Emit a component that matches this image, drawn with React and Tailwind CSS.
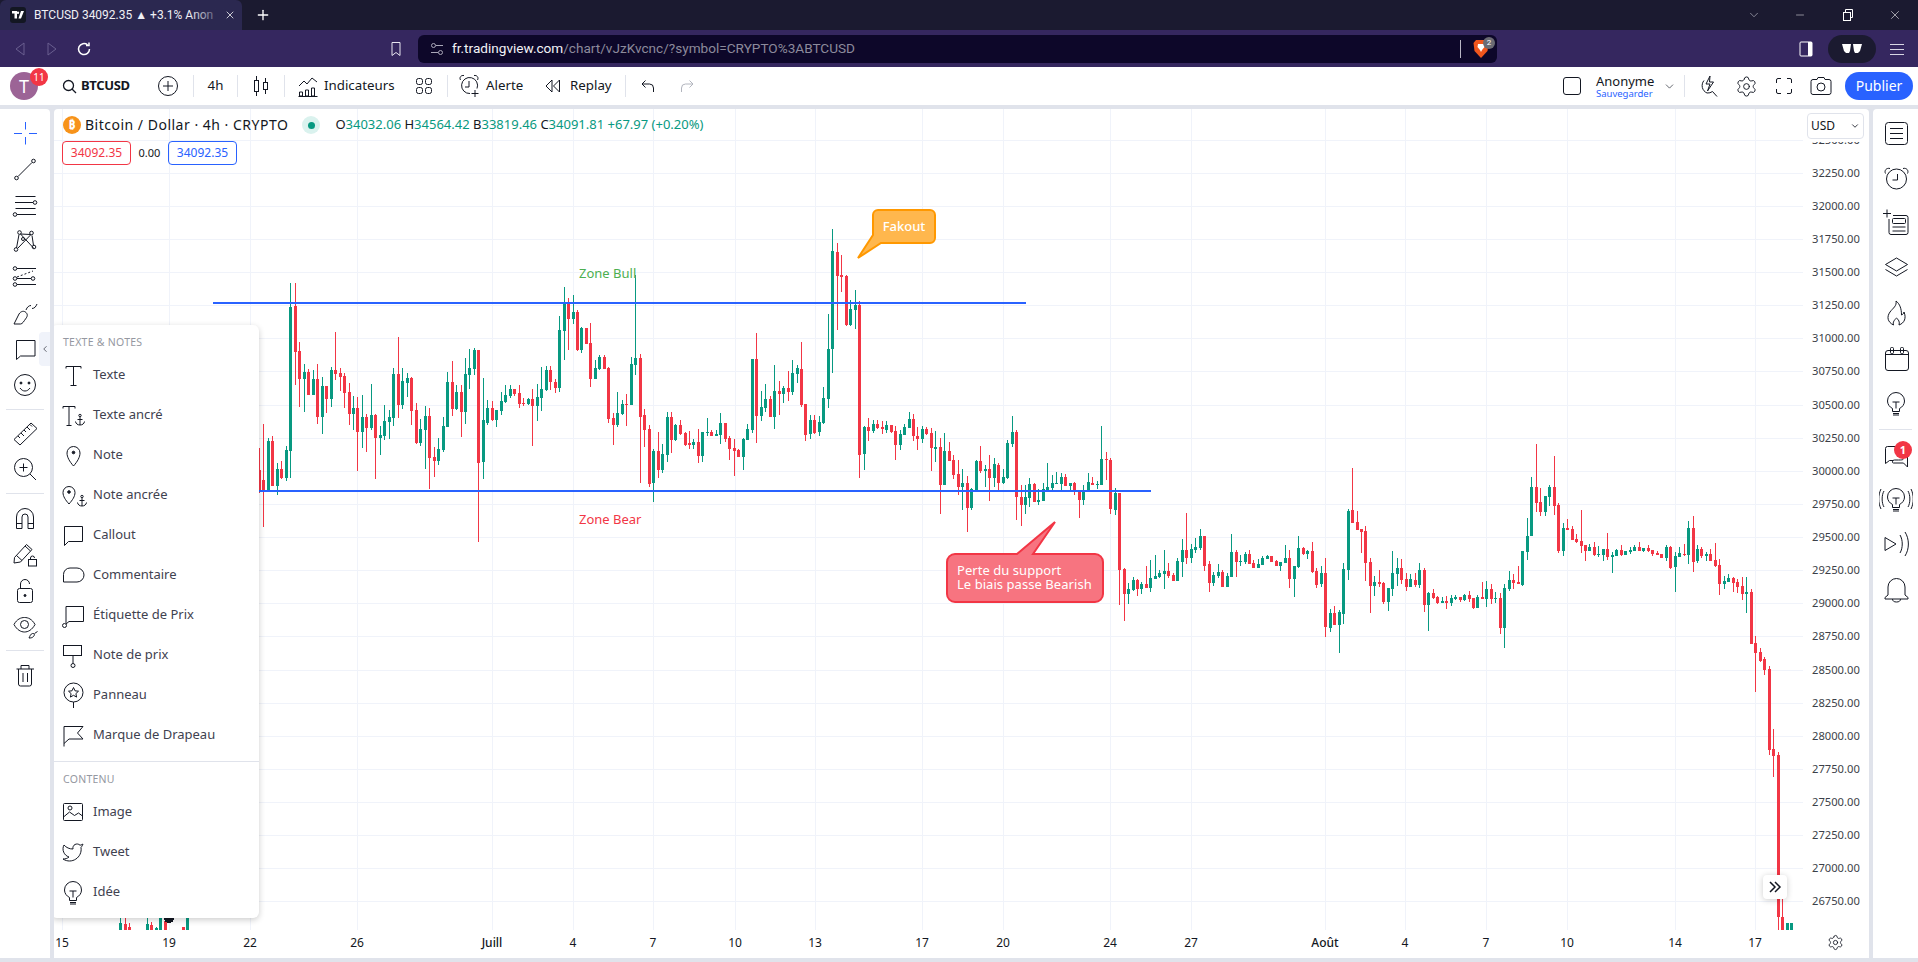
import { Settings, ChevronDown, ChevronLeft, Plus, X, Minus } from 'lucide-react';

// candles as read off the chart: zx colour bodyTop bodyBottom wickTop wickBottom
const SEG_A = `-3 r 810 870 745 880 10 r 840 870 672 980 25 g 723 873 715 875 37 r 723 858 708 858 52 g 807 858 790 885 64 r 807 835 783 838 79 g 750 835 738 842 91 g 321 753 250 835 106 r 318 455 250 555 118 r 453 537 427 621 133 g 516 537 492 636 145 r 516 585 507 585 160 g 537 585 510 585 172 r 537 651 492 672 187 g 558 651 531 702 199 r 558 597 558 639 214 g 510 597 501 621 226 r 510 522 396 540 241 r 519 531 504 573 253 r 528 579 519 624 268 r 576 642 549 675 280 g 624 642 588 690 292 r 624 696 591 813 307 g 651 696 585 744 319 r 651 684 642 756 334 g 645 684 552 690 346 r 645 714 642 837 361 g 705 714 678 765 373 g 663 708 615 720 388 g 651 666 630 717 400 g 522 654 504 678 415 r 522 615 411 654 427 g 543 615 504 627 442 g 534 549 519 591 454 r 534 633 531 675 469 r 630 729 609 732 481 g 687 729 657 738 496 g 648 690 618 807 508 r 648 774 624 867 523 r 771 783 741 831 535 g 747 783 714 795 550 g 678 750 651 756 562 g 546 681 516 681 577 r 546 627 483 648 589 g 576 627 555 630 604 r 576 636 555 711 616 g 522 636 474 672 628 g 504 525 447 567 643 g 450 507 444 525 655 r 450 789 450 1026 670 g 660 786 534 837 682 g 624 669 600 675 697 r 624 660 603 663 709 g 630 660 630 681 724 g 603 633 576 645 736 g 585 606 555 609 751 g 567 588 555 594 763 r 567 582 567 588 778 r 579 612 555 624 790 r 609 612 594 618 805 g 597 612 594 615 817 r 597 618 567 738 832 g 591 618 552 663 844 g 567 594 501 633 859 g 510 570 498 573 871 r 510 546 498 570 886 r 546 564 537 579 898 g 390 564 348 576 913 g 306 393 261 480 925 r 309 357 294 450 940 g 336 357 285 372 952 r 336 450 330 453 964 g 384 450 381 459 979 r 384 432 384 432 991 r 429 537 369 561 1006 g 504 537 480 537 1018 g 471 507 465 510 1033 r 471 507 465 507 1045 r 504 657 501 669 1060 r 654 675 639 735 1072 g 639 675 576 681 1087 g 612 642 600 645 1099 r 612 613 582 678 1114 g 492 615 471 615 1126 g 474 495 225 525 1141 r 474 651 462 849 1153 r 645 690 627 741 1168 r 687 852 675 861 1180 g 753 849 747 906`;

const SEG_B = `55 r 753 810 696 834 67 g 762 810 732 819 82 g 651 765 636 786 94 r 651 720 636 759 107 g 675 720 672 723 121 r 675 702 660 705 136 r 699 735 696 738 148 r 729 735 693 747 160 g 726 735 717 747 175 r 726 768 687 789 187 g 696 768 696 786 202 g 696 699 654 708 214 r 696 708 690 708 228 g 702 708 690 708 241 g 669 705 639 732 256 r 669 717 669 726 268 r 714 747 708 780 283 r 744 753 717 828 295 r 750 771 747 771 310 g 717 771 714 810 322 g 687 720 672 720 337 g 477 690 477 700 349 r 477 648 399 729 364 g 621 648 573 663 376 g 597 624 552 636 391 r 597 651 588 651 403 g 573 651 495 687 418 r 573 582 543 645 430 g 564 582 558 609 445 r 564 576 513 603 457 g 519 576 480 585 472 g 504 522 495 549 485 r 507 615 426 621 497 r 612 705 612 723 511 g 660 702 645 717 523 r 660 699 645 702 538 g 666 696 648 708 550 g 594 669 561 672 565 g 447 597 342 624 577 g 153 447 87 519 592 r 156 228 129 390 604 r 225 231 165 276 619 r 228 375 225 378 631 g 327 375 300 378 646 g 315 330 270 387 658 r 315 765 303 834 673 g 681 762 678 810 685 r 681 693 654 723 700 g 672 693 660 699 712 r 672 684 660 687 727 r 681 687 663 702 739 g 675 690 663 699 754 r 675 696 675 699 766 r 693 735 678 780 781 g 702 735 690 750 793 g 681 705 672 705 808 g 657 684 636 684 820 r 657 708 642 723 832 r 708 717 681 750 847 g 687 717 678 729 859 r 687 702 681 705 874 r 699 744 684 813 886 g 741 747 693 786 901 r 741 855 714 942 913 g 753 855 699 855 928 r 753 783 726 783 940 r 780 825 765 837 955 r 822 861 780 885 967 g 849 861 807 930 982 r 849 924 828 996 994 g 867 924 864 930 1009 g 783 870 780 873 1021 r 783 813 738 819 1036 g 807 813 795 861 1048 r 807 834 765 903 1063 g 792 834 774 861 1075 r 795 849 789 876 1090 g 831 849 807 852 1102 g 729 834 720 837 1117 g 696 732 648 741 1129 r 696 891 690 960 1144 r 891 915 855 978 1156 g 891 915 855 942 1168 g 852 894 834 921 1183 r 852 906 849 906 1195 g 900 906 867 915 1210 g 867 903 849 903 1222 g 861 873 789 873 1237 g 849 864 825 876 1249 g 849 852 816 852 1264 g 831 852 819 870 1276 r 831 858 822 858 1291 g 849 858 849 873 1303 r 849 876 846 885 1318 r 873 900 873 954 1330 g 870 900 855 915 1345 g 846 873 819 873 1357 r 849 855 831 855 1372 g 852 855 843 867 1384 g 777 855 678 855 1399 r 777 780 756 840 1411 r 780 927 774 942 1426 g 879 930 864 945 1438 r 879 1110 879 1215`;

const SEG_C = `73 r 417 492 414 573 85 g 477 492 459 522 100 g 450 480 441 483 112 r 450 477 447 498 124 g 462 477 456 492 139 r 462 474 408 474 151 g 444 474 390 486 166 g 438 447 375 447 178 g 429 441 420 444 193 g 423 432 360 477 205 r 423 438 399 444 220 r 435 453 429 453 232 g 393 453 384 453 247 g 360 396 327 441 259 r 360 384 249 402 274 g 357 384 342 399 286 g 351 360 324 369 301 g 318 354 297 360 313 r 318 408 318 423 328 r 402 459 393 486 340 g 435 459 426 468 355 g 426 438 402 444 367 r 426 471 420 471 382 g 438 471 429 471 394 g 366 441 312 441 409 r 366 396 360 441 421 g 393 396 375 408 436 g 372 396 366 402 448 r 372 402 360 402 461 r 399 414 390 414 475 g 402 414 387 414 487 g 384 405 378 405 502 g 378 387 375 387 514 r 378 396 378 396 529 r 393 408 390 408 541 g 396 408 396 423 556 g 384 399 345 399 568 r 384 447 360 474 583 g 408 447 408 501 595 g 354 411 318 414 610 r 354 372 351 375 622 g 363 372 360 387 637 r 363 426 336 429 649 r 423 465 414 474 664 g 429 462 408 471 676 r 429 591 384 621 691 g 549 594 537 606 703 r 549 585 528 585 718 g 546 585 540 669 730 g 417 552 399 582 745 g 243 420 237 450 757 r 240 279 114 279 772 r 276 300 243 300 784 r 297 306 297 369 796 r 303 399 288 453 811 r 396 468 384 549 823 g 456 468 438 498 838 r 456 462 420 471 850 r 459 516 456 522 865 g 474 516 474 543 877 g 429 477 363 498 892 g 414 432 384 468 904 r 414 450 387 462 919 r 447 471 429 483 931 g 447 471 432 471 946 r 450 465 429 471 958 g 420 465 399 474 973 r 420 525 414 546 985 g 489 525 486 603 1000 r 489 504 477 507 1012 r 501 519 498 522 1027 g 513 519 501 519 1039 r 513 519 498 537 1054 g 504 519 495 528 1066 g 501 507 495 510 1081 r 501 510 501 516 1093 g 495 510 492 513 1108 r 495 507 483 516 1120 r 504 534 504 537 1133 g 501 534 495 534 1147 r 501 507 456 507 1159 g 477 507 453 531 1174 r 477 507 462 522 1186 g 504 507 486 519 1201 r 504 594 489 612 1213 g 474 594 462 654 1228 g 450 477 423 483 1240 r 450 459 432 477 1255 r 456 462 408 462`;

const SEG_D = `67 g 357 456 357 458 82 g 312 360 258 382 94 g 168 312 138 312 109 r 168 215 42 240 121 r 212 240 171 252 136 g 195 240 195 252 148 g 168 197 162 224 163 r 168 224 78 250 175 r 221 357 215 363 190 g 288 357 274 371 202 r 288 295 262 295 217 r 292 324 283 324 229 r 321 330 307 333 244 r 327 342 236 362 256 r 339 357 339 386 268 g 345 357 336 357 283 r 345 368 330 371 295 g 365 368 342 374 310 g 351 368 351 386 322 r 351 374 304 383 337 g 368 374 360 421 349 g 354 371 351 371 364 r 354 368 339 371 376 g 357 368 357 368 391 g 354 360 345 365 403 g 345 357 339 357 418 r 345 357 330 357 430 g 348 357 348 360 445 r 348 357 339 360 457 r 354 366 354 371 472 r 363 368 357 368 484 r 366 377 366 377 499 g 345 377 339 386 511 r 345 405 342 410 526 g 371 404 360 477 538 g 363 374 345 374 553 r 365 368 336 371 565 g 289 368 268 395 580 r 289 389 253 419 592 g 351 386 339 392 604 r 351 371 345 377 619 g 365 371 360 386 631 r 365 386 351 386 646 r 383 401 333 404 658 r 398 454 380 486 673 g 445 454 430 468 685 g 436 448 424 448 700 r 436 451 433 477 712 r 448 463 439 480 727 r 460 483 433 501 739 g 477 483 433 539 754 r 477 630 468 630 766 r 628 657 607 772 781 r 654 680 643 683 793 r 674 706 668 722 808 r 704 943 695 958 820 r 940 961 881 1023 835 r 958 1435 949 1480 847 r 1435 1480 1379 1480`;

// the few candles that poke out under the drawing menu
const SEG_E = `361 g 1180 1200 1150 1200 375 r 1182 1200 1150 1200 388 r 1190 1200 1180 1200 442 g 1182 1200 1150 1200 454 r 1185 1200 1177 1200 468 g 1195 1200 1190 1200 481 g 1150 1200 1150 1200 496 r 1172 1200 1150 1200 551 r 1190 1200 1190 1200 562 g 1150 1200 1150 1200`;

function parseSeg(text, x0, y0, sy) {
  const t = text.trim().split(/\s+/);
  const out = [];
  for (let i = 0; i < t.length; i += 6) {
    out.push({
      x: Math.floor(x0 + Number(t[i]) / 3),
      up: t[i + 1] === 'g',
      top: Math.round(y0 + Number(t[i + 2]) / sy),
      bot: Math.round(y0 + Number(t[i + 3]) / sy),
      wt: Math.round(y0 + Number(t[i + 4]) / sy),
      wb: Math.round(y0 + Number(t[i + 5]) / sy),
    });
  }
  return out;
}

const CANDLES = [
  ...parseSeg(SEG_E, 0, 530, 3),
  ...parseSeg(SEG_A, 260, 200, 3),
  ...parseSeg(SEG_B, 640, 200, 3),
  ...parseSeg(SEG_C, 1100, 430, 3),
  ...parseSeg(SEG_D, 1500, 430, 2.944),
  { x: 1787, up: true, top: 923, bot: 930, wt: 923, wb: 930 },
  { x: 1791, up: true, top: 923, bot: 930, wt: 923, wb: 930 },
];

const PRICES = ['32500.00','32250.00','32000.00','31750.00','31500.00','31250.00','31000.00','30750.00','30500.00','30250.00','30000.00','29750.00','29500.00','29250.00','29000.00','28750.00','28500.00','28250.00','28000.00','27750.00','27500.00','27250.00','27000.00','26750.00'];
const priceY = (i) => Math.round(139.6 + i * 33.12);

const TICKS = [
  ['15', 62], ['19', 169], ['22', 250], ['26', 357], ['Juill', 492, true], ['4', 573], ['7', 653], ['10', 735], ['13', 815], ['17', 922],
  ['20', 1003], ['24', 1110], ['27', 1191], ['Août', 1325, true], ['4', 1405], ['7', 1486], ['10', 1567], ['14', 1675], ['17', 1755],
];

const GREEN = '#089981';
const RED = '#f23645';

const Ico = ({ children, size = 28, box = 28, className = '' }) => (
  <svg width={size} height={size} viewBox={`0 0 ${box} ${box}`} fill="none" stroke="currentColor" strokeWidth="1" className={className}>
    {children}
  </svg>
);

const Anchor = ({ dx = 0, dy = 0 }) => (
  <g transform={`translate(${dx} ${dy})`}>
    <circle cx="21" cy="15.5" r="1.2" />
    <path d="M21 17v8M18.5 19.5h5M16.5 21.5c.3 2.3 2.2 3.5 4.5 3.5s4.2-1.2 4.5-3.5" />
  </g>
);

const Bulb = () => (
  <>
    <path d="M10.5 19.5C7.5 18 5.5 15.2 5.5 12a8.500 8.500 0 0 1 17 0c0 3.2-2 6-5 7.500v3h-7z" />
    <path d="M11 26h6M10.5 13h7M14 13v6.5M11 24.5h6" />
  </>
);

// left toolbar
const Tools = {
  cross: <Ico><path d="M14.5 3v7.5M14.5 18v7.5M3 14.5h8M18 14.5h8" /></Ico>,
  line: <Ico><path d="M7 21.5 21 7.5" /><circle cx="5.5" cy="23" r="1.8" /><circle cx="22.5" cy="6" r="1.8" /></Ico>,
  fib: <Ico><path d="M4.5 5.5h20M4 11.5h18M4.5 17.5h20M6 23.5h19" /><circle cx="24" cy="11.5" r="1.8" /><circle cx="4" cy="23.5" r="1.8" /></Ico>,
  pattern: <Ico><path d="M5.5 21 8 7.5M9.5 7l13 14M20 7.5 7 21M19.5 7.5 9.5 7M21 8.5l1.5 10" /><circle cx="8.5" cy="5.5" r="1.8" /><circle cx="20.5" cy="6" r="1.8" /><circle cx="5" cy="22.5" r="1.8" /><circle cx="23" cy="20" r="1.8" /><circle cx="12" cy="12" r="1.5" /></Ico>,
  predict: <Ico><path d="M6 5.500h19M6 15.500h14M6 21.500h19" /><path d="M6 14 22 8" strokeDasharray="2 2" /><circle cx="4" cy="5.5" r="1.8" /><circle cx="4" cy="15.5" r="1.8" /><circle cx="4" cy="21.5" r="1.8" /><circle cx="22" cy="15.5" r="1.8" /></Ico>,
  brush: <Ico><path d="M3 25c2-3 3-7 5-10s5-3.500 7-1.500 1.500 4-.5 6.500c-1.500 2-3 5-5 5zM15 11c1-3 3-4.500 5-4.500M21 9.500c2.500 0 4-2 5-4.500" /></Ico>,
  callout: <Ico><path d="M5.5 24.5V5.5h18.500v15.500H9.500z" /></Ico>,
  smile: <Ico><circle cx="14" cy="14" r="10.5" /><circle cx="10" cy="12" r="1" fill="currentColor" /><circle cx="18" cy="12" r="1" fill="currentColor" /><path d="M9 17c1.500 2 3 3 5 3s3.500-1 5-3" /></Ico>,
  ruler: <Ico><path d="M3 20.500 20 4l6 5.500L9 26zM7 17l2 2M10 14l3 3M13 11l2 2M16 8l3 3M19 5.500l2 2" /></Ico>,
  zoom: <Ico><circle cx="12.5" cy="12.5" r="9" /><path d="M12.500 8.500v8M8.500 12.500h8M19 19l6 6" /></Ico>,
  magnet: <Ico><path d="M5.500 24.500V13a8.500 8.500 0 0 1 17 0v11.500h-5.500V13a3 3 0 0 0-6 0v11.500zM5.500 19.500H11M17 19.500h5.500" /></Ico>,
  pencil: <Ico><path d="M3.500 17.500 15.500 4.500l5.500 5L9.500 22l-6.500 1zM5.500 15.500l5.500 5M14 6l5.500 5" /><rect x="17.5" y="19.5" width="8" height="6.5" /><path d="M19.500 19.500V18a2 2 0 0 1 4 0" /></Ico>,
  lock: <Ico><rect x="6.5" y="11.5" width="15" height="14" rx="2" /><path d="M9.500 11.500V7a4.500 4.500 0 0 1 9 0" /><circle cx="14" cy="18.5" r="1" fill="currentColor" /></Ico>,
  eye: <Ico><path d="M3 11.500C6 6 10 4.500 13.500 4.500S21 6 24 11.500c-3 5.500-7 7.500-10.500 7.500S6 17 3 11.500z" /><circle cx="13.5" cy="11.5" r="4" /><path d="M18 25c1-2 1.500-4 3.500-4.500s2.500 1.500 1 3-3 1.500-4.500 1.500zM23.500 20.500l3-2" /></Ico>,
  trash: <Ico><path d="M5.500 8h17.500M10 8V4.500h8V8M7.500 8v15a2 2 0 0 0 2 2h9a2 2 0 0 0 2-2V8M12 12v9M16.500 12v9" /></Ico>,
};

const TwitterIcon = (
  <Ico size={24} box={24}><path d="M22 4s-.7 2.100-2 3.400c1.600 10-9.400 17.300-18 11.600 2.200.1 4.400-.6 6-2C3 15.500.5 9.600 3 5c2.200 2.600 5.600 4.100 9 4-.9-4.200 4-6.600 7-3.800 1.100 0 3-1.200 3-1.200z" /></Ico>
);

const MENU_TEXT = [
  ['Texte', <Ico><path d="M7 7.500v-2h15v2M14.500 5.500v19M11.500 24.500h6" /></Ico>],
  ['Texte ancré', <Ico><path d="M4 7.500v-2h12v2M10 5.500v19M7.500 24.500h5" /><Anchor dx="0" dy="-1" /></Ico>],
  ['Note', <Ico><path d="M14.500 25C10.500 20.500 8 16 8 12a6.500 6.500 0 0 1 13 0c0 4-2.500 8.500-6.500 13z" /><circle cx="14.5" cy="11.5" r="1.3" fill="currentColor" /></Ico>],
  ['Note ancrée', <Ico><path d="M10 23C6.500 19 4 15.500 4 11.500a6 6 0 0 1 12 0c0 4-2.500 7.500-6 11.500z" /><circle cx="10" cy="11" r="1.3" fill="currentColor" /><Anchor dx="2" dy="0" /></Ico>],
  ['Callout', <Ico><path d="M5.500 24.500V5.500h18v15H9.500z" /></Ico>],
  ['Commentaire', <Ico><path d="M4.500 21v-7.500A6.500 6.500 0 0 1 11 7h7a7 7 0 0 1 0 14z" /></Ico>],
  ['Étiquette de Prix', <Ico><path d="M7 22V5.500h17.500v15H10L7 23" /><circle cx="5.5" cy="24.5" r="2" /></Ico>],
  ['Note de prix', <Ico><rect x="4.5" y="4.5" width="18" height="10" /><path d="M14 14.500v8" /><circle cx="14" cy="24.5" r="2" /></Ico>],
  ['Panneau', <Ico><circle cx="14.5" cy="11.5" r="9.5" /><path d="M14.500 6.500l1.500 3.300 3.500.4-2.600 2.400.7 3.500-3.100-1.800-3.100 1.800.7-3.500-2.600-2.400 3.500-.4zM14.500 21v6" /></Ico>],
  ['Marque de Drapeau', <Ico><path d="M5 25.500V5.500h19l-5.500 6.500 5.500 6H10l-5 4.500" /></Ico>],
];

const MENU_CONTENT = [
  ['Image', <Ico><rect x="4.5" y="5.5" width="19" height="17" rx="1" /><circle cx="11" cy="10" r="2" /><path d="M4.500 19l6-5 5 3.500 4-2.500 4 3" /></Ico>],
  ['Tweet', TwitterIcon],
  ['Idée', <Ico><Bulb /></Ico>],
];

// right toolbar
const Side = [
  <Ico><rect x="3.5" y="3.5" width="22" height="22" rx="3" /><path d="M8 9.500h13M8 14.500h13M8 19.500h13" /></Ico>,
  <Ico><circle cx="14.5" cy="15" r="10" /><path d="M15.500 10v6H10.500M3.500 9.500c-1.500-3 1-6 4.500-5M25.500 9.500c1.500-3-1-6-4.500-5" /></Ico>,
  <Ico><path d="M11 6.500h13a2 2 0 0 1 2 2v15a2 2 0 0 1-2 2H9a2 2 0 0 1-2-2V10M1 4.500h8M5 .5v8" /><rect x="10.5" y="9.5" width="13" height="5" rx="1" /><path d="M10.500 18h13M10.500 22h13" /></Ico>,
  <Ico><path d="M14.500 4 25.500 10.500 14.500 17 3.500 10.500zM3.500 15.500l11 6.500 11-6.500" /></Ico>,
  <Ico><path d="M14 2c1 5-3 7-6 11-3.500 5-2.500 10 3.500 13-1-3 1-5 3-7 2 1.500 3.500 4 2.500 7 5.500-2 7.500-7 5-13-.5 1.500-1 2.500-2.500 3C19.500 10 18 5 14 2z" /></Ico>,
  <Ico><rect x="3.5" y="6.5" width="23" height="20" rx="2.5" /><path d="M3.500 10.500h23" /><rect x="8.5" y="3.5" width="3" height="6" rx="1" /><rect x="18.5" y="3.500" width="3" height="6" rx="1" /></Ico>,
  <Ico><Bulb /></Ico>,
  null,
  <Ico><path d="M3.500 22.500v-15a2 2 0 0 1 2-2h15a2 2 0 0 1 2 2M25.500 26l-4-4H11.500c-2 0-1-3 1-3h4c3 0 4 0 5-1M3.500 22.500l4-3h4M25.500 13.500V26" /></Ico>,
  <Ico size={34} box={34}><g transform="translate(3 3)"><Bulb /></g><path d="M5 9c-2.500 4-2.500 12 0 16M2 7c-3 6-3 14 0 20M29 9c2.500 4 2.500 12 0 16M32 7c3 6 3 14 0 20" /></Ico>,
  <Ico size={30} box={30}><path d="M4 8.500 15 15 4 21.500zM19 6c3 5 3 13 0 18M24 3c4.500 7 4.500 17 0 24" /></Ico>,
  <Ico><path d="M14.500 3.500A8.500 8.500 0 0 0 6 12v8l-3 2.500v1.500h23v-1.500L23 20v-8a8.500 8.500 0 0 0-8.500-8.500zM10.500 24c0 2 1.500 3 4 3s4-1 4-3" /></Ico>,
];

const ToolCell = ({ children, h = 'h-9' }) => (
  <div className={`${h} w-full flex items-center justify-center shrink-0 text-[#131722]`}>{children}</div>
);

const Sep = () => <div className="w-px h-[22px] bg-[#e0e3eb] shrink-0" />;

function BrowserChrome() {
  return (
    <div className="shrink-0 font-['Roboto',sans-serif]">
      <div className="h-[30px] bg-[#1b1a30] flex items-center text-white">
        <div className="w-[242px] h-full bg-[#2b2850] rounded-t-md flex items-center relative">
          <div className="ml-[10px] w-4 h-4 rounded-[3px] bg-[#131722] flex items-center justify-center">
            <svg width="12" height="8" viewBox="0 0 12 8" fill="#fff"><path d="M0 0h5v7.500H2.500V2.500H0zM6 0.500a1.200 1.200 0 1 1 0 2.400 1.200 1.200 0 0 1 0-2.400zM9 0h3L9 7.500H6.500z" /></svg>
          </div>
          <div className="ml-2 text-xs text-[#f0f0f5] whitespace-nowrap">BTCUSD 34092.35 ▲ +3.1% Anon</div>
          <div className="absolute left-[190px] w-[34px] h-full bg-gradient-to-r from-transparent to-[#2b2850]" />
          <X size={12} strokeWidth={1.5} className="absolute left-[224px]" />
        </div>
        <Plus size={16} strokeWidth={2} className="ml-[13px]" />
        <div className="flex-1" />
        <ChevronDown size={14} strokeWidth={1} className="text-[#d0d0da] mr-[33px]" />
        <Minus size={12} strokeWidth={1} className="mr-[36px]" />
        <svg width="12" height="12" viewBox="0 0 12 12" fill="none" stroke="#fff" className="mr-[34px]"><rect x="1.5" y="3.5" width="7" height="8" /><path d="M3.500 3V.5h7v8H9" /></svg>
        <X size={14} strokeWidth={1} className="mr-[16px]" />
      </div>
      <div className="h-[37px] bg-[#35275f] flex items-center text-white relative">
        <svg width="12" height="14" viewBox="0 0 12 14" fill="none" stroke="#6a5f90" className="ml-[14px]"><path d="M10 1 2 7l8 6z" /></svg>
        <svg width="12" height="14" viewBox="0 0 12 14" fill="none" stroke="#6a5f90" className="ml-5"><path d="M2 1l8 6-8 6z" /></svg>
        <svg width="16" height="16" viewBox="0 0 16 16" fill="none" stroke="#fff" strokeWidth="1.5" className="ml-[18px]"><path d="M13.500 8a5.500 5.500 0 1 1-2-4.200M13 1.500v3h-3" /></svg>
        <svg width="12" height="16" viewBox="0 0 12 16" fill="none" stroke="#e8e6f0" className="ml-[298px]"><path d="M2 1.500h8v13L6 11.500l-4 3z" /></svg>
        <div className="ml-4 w-[1079px] h-7 rounded-md bg-[#0d0729] flex items-center">
          <svg width="14" height="14" viewBox="0 0 14 14" fill="none" stroke="#a9a6b8" className="ml-3"><circle cx="3.5" cy="3.5" r="2" /><path d="M6 3.500h7M1 10.500h7" /><circle cx="10.5" cy="10.5" r="2" /></svg>
          <div className="ml-[8px] text-[13.6px] text-[#8c8a9b] whitespace-nowrap"><span className="text-[#f2f2f6]">fr.tradingview.com</span>/chart/vJzKvcnc/?symbol=CRYPTO%3ABTCUSD</div>
          <div className="flex-1" />
          <div className="w-px h-[18px] bg-[#b8b6c4]" />
          <div className="relative ml-[12px] mr-[8px]">
            <svg width="16" height="20" viewBox="0 0 16 20"><path d="M3 1h10l2.500 3-1 8L8 19 1.500 12l-1-8z" fill="#f1561d" /><path d="M5 5h6l.5 3L9 11l-1 2-1-2-2.500-3z" fill="#fff" /></svg>
            <div className="absolute -top-[2px] -right-[6px] w-3 h-3 rounded-full bg-[#6b6b73] text-[8px] leading-3 text-center">2</div>
          </div>
        </div>
        <svg width="14" height="16" viewBox="0 0 14 16" fill="none" className="ml-[302px]"><rect x="1" y="1" width="12" height="14" rx="1" stroke="#fff" /><rect x="9" y="1" width="4" height="14" fill="#fff" /></svg>
        <div className="ml-[15px] w-12 h-7 rounded-full bg-[#1b1a30] flex items-center justify-center">
          <svg width="20" height="10" viewBox="0 0 20 10" fill="#fff"><path d="M0 0h9l-1 7-1 2H4L2 7zM11 0h9l-2 7-2 2h-3l-1-2z" /></svg>
        </div>
        <svg width="14" height="12" viewBox="0 0 14 12" stroke="#d8d6e4" className="ml-[14px]"><path d="M0 1.500h14M0 6.500h14M0 11.500h14" /></svg>
      </div>
    </div>
  );
}

function TopBar() {
  return (
    <div className="h-[38px] shrink-0 bg-white flex items-center text-[13.3px] text-[#131722]">
      <div className="w-[54px] h-full relative flex items-center">
        <div className="ml-[10px] w-7 h-7 rounded-full bg-[#9c6496] text-white text-lg flex items-center justify-center">T</div>
        <div className="absolute left-[30px] top-[1px] w-[18px] h-[18px] rounded-full bg-[#f23645] text-white text-[10px] flex items-center justify-center">11</div>
      </div>
      <div className="w-[93px] flex items-center pl-[8px] gap-[4px]">
        <svg width="15" height="15" viewBox="0 0 15 15" fill="none" stroke="currentColor" strokeWidth="1.3"><circle cx="6.5" cy="6.5" r="5" /><path d="M10 10l4 4" /></svg>
        <span className="font-bold text-[13px] tracking-tight">BTCUSD</span>
      </div>
      <div className="w-[42px] flex justify-center">
        <svg width="20" height="20" viewBox="0 0 20 20" fill="none" stroke="currentColor"><circle cx="10" cy="10" r="9.5" /><path d="M10 5v10M5 10h10" /></svg>
      </div>
      <div className="w-1" />
      <Sep />
      <div className="w-[43px] text-center">4h</div>
      <Sep />
      <div className="w-[46px] flex justify-center">
        <svg width="16" height="22" viewBox="0 0 16 22" fill="none" stroke="currentColor"><rect x="1.5" y="5.5" width="4" height="11" /><path d="M3.500 1v4.500M3.500 16.500V21M12.500 3v4M12.500 15v4" /><rect x="10.5" y="7.5" width="4" height="7" /></svg>
      </div>
      <Sep />
      <div className="w-[116px] flex items-center pl-[13px] gap-[6px]">
        <svg width="20" height="22" viewBox="0 0 20 22" fill="none" stroke="currentColor"><path d="M1 11l5-5 3 3 5-6 5 4M1.500 21v-4h3v4zM7.500 21v-6h3v6zM13.500 21v-8h3v8zM.5 21.500h19" /></svg>
        <span>Indicateurs</span>
      </div>
      <div className="w-[46px] flex justify-center">
        <svg width="18" height="18" viewBox="0 0 18 18" fill="none" stroke="currentColor"><rect x="1.5" y="1.5" width="6" height="6" rx="2" /><rect x="10.5" y="1.5" width="6" height="6" rx="2" /><rect x="1.5" y="10.5" width="6" height="6" rx="2" /><rect x="10.5" y="10.5" width="6" height="6" rx="2" /></svg>
      </div>
      <Sep />
      <div className="w-[80px] flex items-center pl-[10px] gap-[6px]">
        <svg width="22" height="24" viewBox="0 0 22 24" fill="none" stroke="currentColor"><path d="M12 19.500a8 8 0 1 1 7-5M11 7v6H7M2.500 6C1 3.500 3 1 6 1.500M19.500 6C21 3.500 19 1 16 1.500M17 16v7M13.500 19.500h7" /></svg>
        <span>Alerte</span>
      </div>
      <div className="w-[97px] flex items-center pl-[17px] gap-[9px]">
        <svg width="16" height="14" viewBox="0 0 16 14" fill="none" stroke="currentColor"><path d="M7 1 1 7l6 6zM14.500 1 8.500 7l6 6z" /></svg>
        <span>Replay</span>
      </div>
      <Sep />
      <div className="w-[44px] flex justify-center">
        <svg width="14" height="14" viewBox="0 0 14 14" fill="none" stroke="currentColor"><path d="M4.500 1.500 1 5l3.500 3.500M1 5h7.500a4 4 0 0 1 4 4v4" /></svg>
      </div>
      <div className="w-[34px] flex justify-center text-[#b2b5be]">
        <svg width="14" height="14" viewBox="0 0 14 14" fill="none" stroke="currentColor"><path d="M9.500 1.500 13 5 9.500 8.500M13 5H5.500a4 4 0 0 0-4 4v4" /></svg>
      </div>
      <div className="flex-1" />
      <div className="w-[18px] h-[18px] rounded-[3px] border border-[#131722]" />
      <div className="ml-[15px] w-[57px] flex flex-col leading-none">
        <span className="text-[13px] leading-[14px]">Anonyme</span>
        <span className="text-[9.5px] leading-[11px] text-[#2962ff]">Sauvegarder</span>
      </div>
      <ChevronDown size={13} strokeWidth={1.2} className="ml-[10px]" />
      <div className="w-2" />
      <Sep />
      <div className="w-1" />
      <div className="w-[38px] flex justify-center">
        <svg width="20" height="22" viewBox="0 0 20 22" fill="none" stroke="currentColor"><path d="M6 5.500A8 8 0 0 0 9 18a8 8 0 0 0 5.500-1.500M14.500 16.500l4.500 5M12 1 8 9h4l-2.500 7 6-9h-4z" /></svg>
      </div>
      <div className="w-[38px] flex justify-center"><Settings size={23} strokeWidth={1} /></div>
      <div className="w-[38px] flex justify-center">
        <svg width="18" height="18" viewBox="0 0 18 18" fill="none" stroke="currentColor"><path d="M1.500 6V3a1.500 1.500 0 0 1 1.500-1.500h3M12 1.500h3A1.500 1.500 0 0 1 16.500 3v3M16.500 12v3a1.500 1.500 0 0 1-1.500 1.500h-3M6 16.500H3A1.500 1.500 0 0 1 1.500 15v-3" /></svg>
      </div>
      <div className="w-[36px] flex justify-center">
        <svg width="22" height="20" viewBox="0 0 22 20" fill="none" stroke="currentColor"><path d="M7 3.500 8 1.500h6l1 2h4a2 2 0 0 1 2 2v11a2 2 0 0 1-2 2H3a2 2 0 0 1-2-2v-11a2 2 0 0 1 2-2z" /><circle cx="11" cy="11" r="4" /></svg>
      </div>
      <div className="ml-[6px] mr-[5px] w-[68px] h-7 rounded-[14px] bg-[#2962ff] text-white text-sm flex items-center justify-center">Publier</div>
    </div>
  );
}

function LeftToolbar() {
  return (
    <div className="w-[50px] shrink-0 bg-white rounded-tr flex flex-col pt-[6px] relative">
      <div className="h-9 w-full flex items-center justify-center text-[#2962ff]">{Tools.cross}</div>
      <ToolCell>{Tools.line}</ToolCell>
      <ToolCell>{Tools.fib}</ToolCell>
      <ToolCell>{Tools.pattern}</ToolCell>
      <ToolCell>{Tools.predict}</ToolCell>
      <ToolCell>{Tools.brush}</ToolCell>
      <ToolCell>{Tools.callout}</ToolCell>
      <ToolCell>{Tools.smile}</ToolCell>
      <div className="mx-[6px] mt-[6px] mb-[5px] h-px bg-[#e0e3eb]" />
      <ToolCell>{Tools.ruler}</ToolCell>
      <ToolCell>{Tools.zoom}</ToolCell>
      <div className="mx-[6px] mt-[6px] mb-[6px] h-px bg-[#e0e3eb]" />
      <ToolCell>{Tools.magnet}</ToolCell>
      <ToolCell>{Tools.pencil}</ToolCell>
      <ToolCell h="h-[38px]">{Tools.lock}</ToolCell>
      <ToolCell h="h-[34px]">{Tools.eye}</ToolCell>
      <div className="mx-[6px] mt-[6px] mb-[6px] h-px bg-[#e0e3eb]" />
      <ToolCell>{Tools.trash}</ToolCell>
      <div className="absolute left-[39px] top-[223px] w-[11px] h-[34px] bg-[#f0f3fa] rounded-l flex items-center justify-center text-[#131722]">
        <ChevronLeft size={10} strokeWidth={1.5} />
      </div>
    </div>
  );
}

function RightToolbar() {
  return (
    <div className="w-[45px] shrink-0 bg-white rounded-tl flex flex-col pt-[1.5px] relative">
      {Side.map((icon, i) =>
        icon ? (
          <div key={i} className={`w-full flex items-center justify-center text-[#131722] shrink-0 ${i === 8 ? 'h-[44px]' : 'h-[45px]'}`}>{icon}</div>
        ) : (
          <div key={i} className="mx-[6px] my-[3px] h-px bg-[#e0e3eb] shrink-0" />
        ),
      )}
      <div className="absolute left-[21px] top-[332px] w-[18px] h-[18px] rounded-full bg-[#f23645] text-white text-[11px] font-bold flex items-center justify-center">1</div>
    </div>
  );
}

function ChartSvg() {
  return (
    <svg className="absolute inset-0" width="1815" height="849" viewBox="54 109 1815 849" shapeRendering="crispEdges">
      <defs>
        <clipPath id="pane"><rect x="54" y="109" width="1749" height="821" /></clipPath>
      </defs>
      <g clipPath="url(#pane)">
        {TICKS.map(([label, x]) => <rect key={label + x} x={x} y="109" width="1" height="821" fill="#f0f3fa" />)}
        {PRICES.map((p, i) => <rect key={p} x="54" y={priceY(i)} width="1749" height="1" fill="#f0f3fa" />)}
        {CANDLES.map((c, i) => (
          <g key={i} fill={c.up ? GREEN : RED}>
            <rect x={c.x} y={c.wt} width="1" height={Math.max(1, c.wb - c.wt)} />
            <rect x={c.x - 1} y={c.top} width="3" height={Math.max(1, c.bot - c.top)} />
          </g>
        ))}
        <circle cx="169" cy="918" r="5" fill="#131722" />
        <rect x="213" y="302" width="813" height="2" fill="#2962ff" />
        <rect x="200" y="490" width="951" height="2" fill="#2962ff" />
        <g shapeRendering="auto">
          <path d="M878 210H930a5 5 0 0 1 5 5V238a5 5 0 0 1-5 5H881L858 258 873 235V215a5 5 0 0 1 5-5z" fill="#ffb74d" stroke="#ff9800" strokeWidth="2" />
          <path d="M955 554H1017L1055 522 1033 554H1095a8 8 0 0 1 8 8V594a8 8 0 0 1-8 8H955a8 8 0 0 1-8-8V562a8 8 0 0 1 8-8z" fill="#f77480" stroke="#f23645" strokeWidth="2" />
        </g>
      </g>
    </svg>
  );
}

function ChartArea() {
  return (
    <div className="flex-1 bg-white relative rounded-t overflow-hidden font-['Noto_Sans',sans-serif]">
      <ChartSvg />

      {/* legend */}
      <div className="absolute left-[9px] top-[7px] h-[18px] flex items-center whitespace-nowrap">
        <div className="w-[18px] h-[18px] rounded-full bg-[#f7931a] text-white text-xs font-bold flex items-center justify-center">₿</div>
        <span className="ml-1 text-sm tracking-[0.5px] text-[#131722]">Bitcoin / Dollar · 4h · CRYPTO</span>
        <div className="ml-[14px] w-[18px] h-[18px] rounded-full bg-[#daf2ee] flex items-center justify-center">
          <div className="w-[7px] h-[7px] rounded-full bg-[#089981]" />
        </div>
        <div className="ml-[15px] text-[13px] text-[#089981]">
          <span className="text-[#131722]">O</span>34032.06 <span className="text-[#131722]">H</span>34564.42 <span className="text-[#131722]">B</span>33819.46 <span className="text-[#131722]">C</span>34091.81 +67.97 (+0.20%)
        </div>
      </div>
      <div className="absolute left-[8px] top-[32px] flex items-center text-xs">
        <div className="w-[69px] h-6 rounded-[4px] border border-[#f23645] text-[#f23645] flex items-center justify-center">34092.35</div>
        <div className="w-[37px] text-center text-[11px] text-[#131722]">0.00</div>
        <div className="w-[69px] h-6 rounded-[4px] border border-[#2962ff] text-[#2962ff] flex items-center justify-center">34092.35</div>
      </div>

      {/* drawing labels */}
      <div className="absolute left-[525px] top-[155px] text-[13px] leading-[18px] text-[#4caf50] whitespace-nowrap">Zone Bull</div>
      <div className="absolute left-[525px] top-[401px] text-[13px] leading-[18px] text-[#f23645] whitespace-nowrap">Zone Bear</div>
      <div className="absolute left-[818px] top-[108px] w-[64px] text-center text-[13px] leading-[18px] font-medium text-white">Fakout</div>
      <div className="absolute left-[903px] top-[454px] text-[13px] leading-[14px] tracking-[0.05px] text-white whitespace-nowrap">Perte du support<br />Le biais passe Bearish</div>

      {/* price axis */}
      {PRICES.map((p, i) => (
        <div key={p} className="absolute left-[1758px] text-[11.2px] leading-[14px] text-[#3c3f49]" style={{ top: priceY(i) - 109 - 7 }}>{p}</div>
      ))}
      <div className="absolute left-[1753px] top-0 w-[57px] pt-[4px] pb-[3px] bg-white">
        <div className="h-[26px] border border-[#e0e3eb] rounded-[4px] bg-white flex items-center justify-between pl-[3px] pr-[3px] text-xs text-[#131722]">
          <span>USD</span>
          <ChevronDown size={10} strokeWidth={2} />
        </div>
      </div>

      {/* time axis */}
      {TICKS.map(([label, x, strong]) => (
        <div key={label + x} className={`absolute top-[827px] w-10 -ml-5 text-center text-xs leading-[14px] text-[#131722] ${strong ? 'font-medium' : ''}`} style={{ left: x - 54 }}>{label}</div>
      ))}
      <div className="absolute left-[1773px] top-[825px] text-[#131722]"><Settings size={17} strokeWidth={1.2} /></div>

      <div className="absolute left-[1709px] top-[766px] w-6 h-6 rounded bg-white shadow-[0_1px_6px_rgba(0,0,0,0.2)] flex items-center justify-center">
        <svg width="14" height="12" viewBox="0 0 14 12" fill="none" stroke="#131722" strokeWidth="1.5"><path d="M2 1l5 5-5 5M7 1l5 5-5 5" /></svg>
      </div>

      {/* drawing menu */}
      <DrawingMenu />
    </div>
  );
}

const MenuRow = ({ label, icon }) => (
  <div className="h-10 flex items-center text-[13px] text-[#3f4250]">
    <div className="w-7 ml-[8px] flex items-center justify-center text-[#131722]">{icon}</div>
    <span className="ml-[6px]">{label}</span>
  </div>
);

function DrawingMenu() {
  return (
    <div className="absolute -left-[3px] top-[216px] w-[208px] h-[593px] bg-white rounded-md shadow-[0_2px_6px_rgba(0,0,0,0.2)]">
      <div className="h-[30px] pt-[6px] pl-3 flex items-center text-[10.5px] tracking-wide text-[#9598a1]">TEXTE &amp; NOTES</div>
      {MENU_TEXT.map(([label, icon]) => <MenuRow key={label} label={label} icon={icon} />)}
      <div className="mt-[6px] h-px bg-[#e0e3eb]" />
      <div className="h-[30px] pt-[6px] pl-3 flex items-center text-[10.5px] tracking-wide text-[#9598a1]">CONTENU</div>
      {MENU_CONTENT.map(([label, icon]) => <MenuRow key={label} label={label} icon={icon} />)}
    </div>
  );
}

export default function App() {
  return (
    <div className="w-[1918px] h-[962px] overflow-hidden flex flex-col bg-[#e0e3eb] font-['Noto_Sans',sans-serif]">
      <BrowserChrome />
      <TopBar />
      <div className="flex-1 min-h-0 flex gap-1 py-1">
        <LeftToolbar />
        <ChartArea />
        <RightToolbar />
      </div>
    </div>
  );
}
